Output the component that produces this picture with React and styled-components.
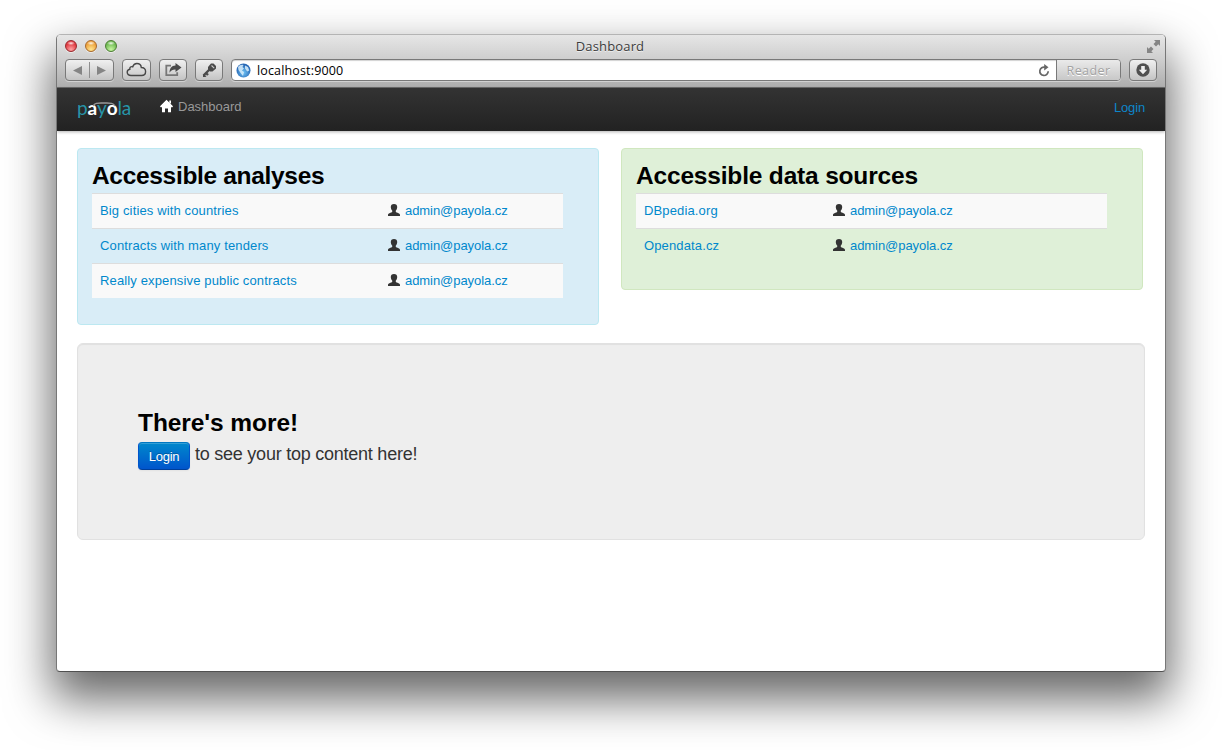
import React from "react";
import styled, { createGlobalStyle } from "styled-components";

const Global = createGlobalStyle`
  * { box-sizing: border-box; }
  body { margin: 0; background: #fff; font-family: "Liberation Sans", Arial, sans-serif; font-size: 13px; color: #333; }
`;

const Desktop = styled.div`
  width: 1222px;
  height: 750px;
  padding: 34px 56px 78px;
  overflow: hidden;
`;

const Window = styled.div`
  display: flex;
  flex-direction: column;
  width: 1110px;
  height: 638px;
  border: 1px solid #777;
  border-top-color: #b4b4b4;
  border-bottom-color: #505050;
  border-radius: 5px 5px 4px 4px;
  background: #fff;
  box-shadow: 0 23px 46px 4px rgba(0, 0, 0, 0.6);
  overflow: hidden;
`;

const Chrome = styled.header`
  flex: none;
  height: 53px;
  padding: 0 8px;
  background: linear-gradient(#e6e6e6, #cfcfcf 45%, #aeaeae);
  border-bottom: 1px solid #6c6c6c;
  font-family: "Open Sans", "Noto Sans", sans-serif;
`;

const TitleBar = styled.div`
  display: grid;
  grid-template-columns: 1fr auto 1fr;
  align-items: center;
  height: 22px;
`;

const Lights = styled.div`
  display: flex;
  gap: 8px;
`;

const Light = styled.span`
  width: 12px;
  height: 12px;
  border-radius: 50%;
  border: 1px solid ${(p) => p.$edge};
  background:
    radial-gradient(ellipse 4px 2px at 50% 22%, rgba(255, 255, 255, 0.9), transparent),
    radial-gradient(circle at 50% 85%, ${(p) => p.$glow}, ${(p) => p.$tone} 65%);
  box-shadow: 0 1px 0 rgba(255, 255, 255, 0.5);
`;

const WindowTitle = styled.div`
  margin-right: 2px;
  font-size: 13px;
  line-height: 18px;
  letter-spacing: 0.15px;
  color: #3c3c3c;
  text-shadow: 0 1px 0 rgba(255, 255, 255, 0.6);
`;

const Expand = styled.svg`
  justify-self: end;
  margin-right: -4px;
`;

const Toolbar = styled.div`
  display: flex;
  align-items: center;
  gap: 8px;
  padding-top: 2px;
`;

const ToolButton = styled.span`
  display: flex;
  align-items: center;
  justify-content: center;
  width: ${(p) => p.$w}px;
  height: 22px;
  border: 1px solid #797979;
  border-radius: 4px;
  background: linear-gradient(#f0f0f0, #c4c4c4);
  box-shadow: 0 1px 0 rgba(255, 255, 255, 0.4);
`;

const AddressBar = styled.div`
  display: flex;
  flex: 1;
  align-items: center;
  height: 22px;
  padding-left: 4px;
  border: 1px solid #797979;
  border-radius: 4px;
  background: #fff;
  box-shadow: inset 0 1px 1px rgba(0, 0, 0, 0.18), 0 1px 0 rgba(255, 255, 255, 0.4);
  overflow: hidden;
`;

const Address = styled.span`
  flex: 1;
  margin-left: 6px;
  font-size: 12.5px;
  letter-spacing: 0.15px;
  color: #000;
`;

const Reader = styled.span`
  display: flex;
  align-items: center;
  justify-content: center;
  width: 64px;
  height: 22px;
  margin-left: 6px;
  border-left: 1px solid #797979;
  background: linear-gradient(#ececec, #c6c6c6);
  font-size: 12.5px;
  letter-spacing: 0.4px;
  color: #a2a2a2;
  text-shadow: 0 1px 0 #fff;
`;

const NavBar = styled.nav`
  display: flex;
  flex: none;
  height: 43px;
  padding: 0 20px;
  background: linear-gradient(#333, #222);
  box-shadow: 0 1px 3px rgba(0, 0, 0, 0.3);
`;

const Brand = styled.div`
  position: relative;
  width: 83px;
  padding-top: 8px;
  font-family: Lato, sans-serif;
  font-size: 19px;
  font-weight: 400;
  line-height: 24px;
  letter-spacing: -0.15px;
  color: #2795a9;
`;

const Cuffed = styled.span`
  font-weight: 700;
  color: #fff;
`;

const Chain = styled.svg`
  position: absolute;
  left: 15px;
  top: 13px;
`;

const NavItem = styled.span`
  display: flex;
  gap: 5px;
  padding-top: 11px;
  line-height: 15px;
  color: #999;
`;

const NavLogin = styled.a`
  margin-left: auto;
  padding-top: 12px;
  line-height: 15px;
  letter-spacing: -0.15px;
  color: #0d86ca;
`;

const Page = styled.main`
  padding: 17px 20px 0;
`;

const Columns = styled.div`
  display: flex;
  align-items: flex-start;
  gap: 22px;
`;

const tones = {
  info: { bg: "#d9edf7", edge: "#bce8f1" },
  success: { bg: "#dff0d8", edge: "#d0e7bf" },
};

const Panel = styled.section`
  width: 522px;
  padding: 10px 14px 26px;
  border: 1px solid ${(p) => tones[p.$tone].edge};
  border-radius: 4px;
  background: ${(p) => tones[p.$tone].bg};
`;

const Heading = styled.h3`
  margin: 0;
  font-size: 24.5px;
  font-weight: 700;
  line-height: ${(p) => p.$line || 34}px;
  letter-spacing: ${(p) => p.$track || 0}px;
  color: #000;
`;

const Rows = styled.div`
  width: 471px;
`;

const Row = styled.div`
  display: grid;
  grid-template-columns: ${(p) => p.$first}px 1fr;
  height: 35px;
  padding: 9px 8px 0;
  border-top: 1px solid #ddd;
  line-height: 16px;
  &:nth-child(odd) { background: #f9f9f9; }
`;

const Link = styled.a`
  color: #0088cc;
  letter-spacing: ${(p) => p.$track}px;
`;

const Owner = styled.span`
  display: flex;
  gap: 5px;
`;

const Hero = styled.section`
  width: 1068px;
  height: 197px;
  margin-top: 18px;
  padding: 60px;
  border: 1px solid #e1e1e1;
  border-radius: 6px;
  background: #eee;
  box-shadow: inset 0 1px 1px rgba(0, 0, 0, 0.06);
`;

const HeroLine = styled.div`
  display: flex;
  gap: 5px;
  padding-top: 1px;
  font-size: 18px;
  line-height: 24px;
  letter-spacing: -0.24px;
`;

const PrimaryButton = styled.button`
  width: 52px;
  height: 28px;
  padding: 1px 0 0;
  border: 1px solid #0057b8;
  border-color: #0077c2 #0055cc #003f9a;
  border-radius: 4px;
  background: linear-gradient(#0088cc, #0055cc);
  box-shadow: inset 0 1px 0 rgba(255, 255, 255, 0.2), 0 1px 2px rgba(0, 0, 0, 0.05);
  font: 13px "Liberation Sans", Arial, sans-serif;
  letter-spacing: -0.3px;
  color: #fff;
  text-shadow: 0 -1px 0 rgba(0, 0, 0, 0.25);
`;

const UserIcon = () => (
  <svg width="12" height="14" viewBox="0 0 12 14" fill="#333">
    <path d="M6 1c2.200 0 3.200 1.200 3.200 3 0 1.500-.6 2.800-1.400 3.600v1.500c.8.900 4.200 1.100 4.200 2.900v1H0v-1c0-1.800 3.400-2 4.200-2.900V7.600C3.400 6.800 2.800 5.500 2.800 4 2.800 2.200 3.800 1 6 1z" />
  </svg>
);

const OwnedRow = ({ name, first }) => (
  <Row $first={first}>
    <Link $track={0.14}>{name}</Link>
    <Owner>
      <UserIcon />
      <Link $track={-0.06}>admin@payola.cz</Link>
    </Owner>
  </Row>
);

const analyses = ["Big cities with countries", "Contracts with many tenders", "Really expensive public contracts"];
const sources = ["DBpedia.org", "Opendata.cz"];

export default function App() {
  return (
    <Desktop>
      <Global />
      <Window>
        <Chrome>
          <TitleBar>
            <Lights>
              <Light $edge="#99272b" $tone="#e0383f" $glow="#ffa4a4" />
              <Light $edge="#a8682a" $tone="#eda23c" $glow="#ffe690" />
              <Light $edge="#4b7d33" $tone="#6fba52" $glow="#c8f7a2" />
            </Lights>
            <WindowTitle>Dashboard</WindowTitle>
            <Expand width="15" height="15" viewBox="0 0 15 15" fill="#858585">
              <path d="M8 1h6v6l-1.700-1.700L10 7.500 7.500 5 9.700 2.700zM1 8l1.700 1.700L5 7.500 7.500 10l-2.200 2.300L7 14H1z" />
            </Expand>
          </TitleBar>
          <Toolbar>
            <ToolButton $w={49}>
              <svg width="47" height="20" viewBox="0 0 47 20">
                <path d="M23.500 2v16" stroke="#8e8e8e" />
                <path d="M16 6v9l-9-4.500zM31 6v9l9-4.500z" fill="#858585" />
              </svg>
            </ToolButton>
            <ToolButton $w={29}>
              <svg width="21" height="16" viewBox="0 0 21 16" fill="none" stroke="#484848" strokeWidth="1.400">
                <path d="M5 13.500C2.700 13.500 1.200 12.200 1.200 10.300 1.200 8.700 2.300 7.500 3.800 7.300 3.500 5.300 5 4.200 6.700 4.800 7.300 2.800 8.800 1.500 10.900 1.500c2.500 0 4.200 1.700 4.400 4 2.500-.1 4.300 1.600 4.300 4 0 2.400-1.600 4-4 4z" />
              </svg>
            </ToolButton>
            <ToolButton $w={28}>
              <svg width="18" height="16" viewBox="0 0 18 16">
                <path d="M7 3.700H2.300v9.500h10.900v-3" fill="none" stroke="#777" strokeWidth="1.800" />
                <path d="M11.500 1 17.500 5.500l-6 4.500V7.400C9 7.300 7 8.200 5.500 10.700 5.700 6.500 7.500 3.800 11.500 3.600z" fill="#4a4a4a" />
              </svg>
            </ToolButton>
            <ToolButton $w={28}>
              <svg width="16" height="16" viewBox="0 0 16 16">
                <path d="M9 7 2.500 13.500M5 11l2 2" stroke="#4a4a4a" strokeWidth="2.400" />
                <path d="M2 12.500V15h2.500l1-1z" fill="#4a4a4a" />
                <path d="M7 5 10 1.500h2.500L15 4v2.500L11.500 9.500H9L7 7.500z" fill="#4a4a4a" />
                <path d="m10.500 3.500 2.700 2.700" stroke="#ccc" strokeWidth="1.100" />
              </svg>
            </ToolButton>
            <AddressBar>
              <svg width="15" height="15" viewBox="0 0 15 15">
                <defs>
                  <radialGradient id="sea" cx=".5" cy=".65" r=".55">
                    <stop offset="0" stopColor="#6fc4f5" />
                    <stop offset="1" stopColor="#2767b5" />
                  </radialGradient>
                </defs>
                <circle cx="7.500" cy="7.500" r="7" fill="url(#sea)" />
                <path d="M2 4C3.500 1.800 6 1.200 7.500 2L6.500 4 8 5.500 6 7.500l2 1.500-1 4-2-2.500L2.500 7zM9 2.500l3 1.500 1.200 3.500-2 1-2.200-3z" fill="#d9effb" opacity=".85" />
              </svg>
              <Address>localhost:9000</Address>
              <svg width="12" height="13" viewBox="0 0 12 13">
                <path d="M10.200 7.300A4.200 4.200 0 1 1 7 3.200" fill="none" stroke="#666" strokeWidth="1.700" />
                <path d="M6.200 0 10.500 3.300 6.200 6.500z" fill="#666" />
              </svg>
              <Reader>Reader</Reader>
            </AddressBar>
            <ToolButton $w={28}>
              <svg width="14" height="14" viewBox="0 0 14 14">
                <circle cx="7" cy="7" r="6.700" fill="#505050" />
                <path d="M5.200 3h3.600v3.700h2.400L7 11.200 2.800 6.700h2.400z" fill="#eee" />
              </svg>
            </ToolButton>
          </Toolbar>
        </Chrome>
        <NavBar>
          <Brand>
            p<Cuffed>a</Cuffed>y<Cuffed>o</Cuffed>la
            <Chain width="24" height="6" viewBox="0 0 24 6" fill="none" stroke="#999">
              <path d="M1 5C3 1.500 6 2 12 2s9-.5 11 3" strokeWidth="1.300" />
            </Chain>
          </Brand>
          <NavItem>
            <svg width="13" height="14" viewBox="0 0 13 14" fill="#fff">
              <path d="M6.500.8 13 7.300l-.6.900H11v5H8V9.500H5v3.700H2v-5H.6L0 7.300z" />
              <path d="M9.300 1.600H11v3H9.300z" />
            </svg>
            Dashboard
          </NavItem>
          <NavLogin>Login</NavLogin>
        </NavBar>
        <Page>
          <Columns>
            <Panel $tone="info">
              <Heading $track={-0.32}>Accessible analyses</Heading>
              <Rows>{analyses.map((n) => <OwnedRow key={n} name={n} first={288} />)}</Rows>
            </Panel>
            <Panel $tone="success">
              <Heading $track={-0.18}>Accessible data sources</Heading>
              <Rows>{sources.map((n) => <OwnedRow key={n} name={n} first={189} />)}</Rows>
            </Panel>
          </Columns>
          <Hero>
            <Heading $line={37} $track={-0.08}>There's more!</Heading>
            <HeroLine>
              <PrimaryButton>Login</PrimaryButton>
              to see your top content here!
            </HeroLine>
          </Hero>
        </Page>
      </Window>
    </Desktop>
  );
}
